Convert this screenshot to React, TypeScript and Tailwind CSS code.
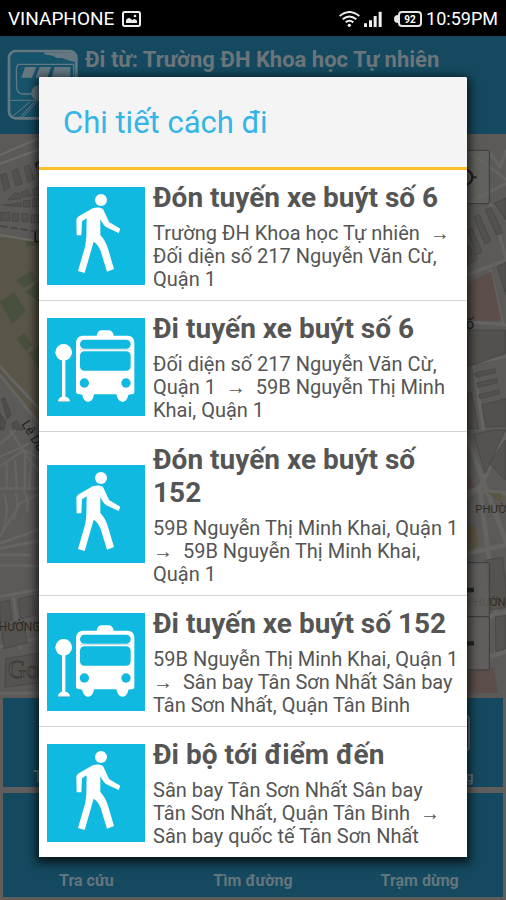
interface Step {
  mode: "walk" | "bus";
  title: string;
  from: string;
  to: string;
}

const steps: Step[] = [
  {
    mode: "walk",
    title: "Đón tuyến xe buýt số 6",
    from: "Trường ĐH Khoa học Tự nhiên",
    to: "Đối diện số 217 Nguyễn Văn Cừ, Quận 1",
  },
  {
    mode: "bus",
    title: "Đi tuyến xe buýt số 6",
    from: "Đối diện số 217 Nguyễn Văn Cừ, Quận 1",
    to: "59B Nguyễn Thị Minh Khai, Quận 1",
  },
  {
    mode: "walk",
    title: "Đón tuyến xe buýt số 152",
    from: "59B Nguyễn Thị Minh Khai, Quận 1",
    to: "59B Nguyễn Thị Minh Khai, Quận 1",
  },
  {
    mode: "bus",
    title: "Đi tuyến xe buýt số 152",
    from: "59B Nguyễn Thị Minh Khai, Quận 1",
    to: "Sân bay Tân Sơn Nhất Sân bay Tân Sơn Nhất, Quận Tân Binh",
  },
  {
    mode: "walk",
    title: "Đi bộ tới điểm đến",
    from: "Sân bay Tân Sơn Nhất Sân bay Tân Sơn Nhất, Quận Tân Binh",
    to: "Sân bay quốc tế Tân Sơn Nhất",
  },
];

function WalkIcon() {
  return (
    <svg viewBox="0 0 294 294" className="size-[98px] shrink-0 bg-[#0fb9e0]" aria-hidden="true">
      <g fill="#fff">
        <circle cx="162" cy="39" r="18" />
        <path d="M137 64 C147 60 161 60 168 66 C177 83 180 94 187 106 L220 125 L215 138 L178 121 C170 115 165 107 160 96 L160 144 C171 156 178 169 183 185 L201 246 L180 254 L161 192 C156 178 148 169 140 164 L113 258 L93 252 L115 176 L118 151 L119 94 L105 103 L103 145 L89 145 L88 98 C89 92 93 89 98 86 Z" />
      </g>
    </svg>
  );
}

function BusIcon() {
  return (
    <svg viewBox="0 0 294 294" className="size-[98px] shrink-0 bg-[#0fb9e0]" aria-hidden="true">
      <g fill="#fff">
        <circle cx="50" cy="103" r="25" />
        <path d="M45 125 H55 V236 C63 237 68 242 69 250 H33 C34 242 39 237 45 236 Z" />
        <path d="M107 53 H149 C152 40 158 37 164 37 H185 C192 37 198 41 200 53 H243 C256 54 262 62 262 76 V222 C262 226 259 229 252 229 L244 230 C242 243 235 251 226 251 C217 251 211 243 208 229 H141 C139 243 133 251 124 251 C115 251 108 244 106 230 L98 229 C90 229 87 226 87 220 V76 C87 62 95 54 107 53 Z" />
      </g>
      <g fill="#0fb9e0">
        <rect x="99" y="65" width="152" height="27" rx="13" />
        <rect x="99" y="100" width="152" height="58" rx="13" />
        <circle cx="112" cy="195" r="14" />
        <circle cx="237" cy="195" r="14" />
      </g>
      <path d="M99 95 H251" stroke="#a9c5ca" strokeWidth="2" />
      <path d="M55 128 V234 M33 250 H69" stroke="#a9c5ca" strokeWidth="3" />
    </svg>
  );
}

function StatusBar() {
  return (
    <div className="flex h-9 items-center justify-between bg-black px-2 pt-0.5 text-white">
      <div className="flex items-center gap-2">
        <span className="text-[19px]">VINAPHONE</span>
        <svg viewBox="0 0 57 48" className="h-4 w-[19px]" aria-hidden="true">
          <rect x="3" y="3" width="51" height="42" rx="5" fill="none" stroke="#eee" strokeWidth="6" />
          <path d="M12 36 V28 Q19 17 27 24 L31 28 Q37 20 45 29 V36 Z" fill="#eee" />
          <circle cx="39" cy="15" r="4" fill="#eee" />
        </svg>
      </div>
      <div className="flex items-center gap-1">
        <svg viewBox="0 0 63 48" className="h-4 w-[21px]" fill="none" stroke="#eee" strokeWidth="6" aria-hidden="true">
          <path d="M2 15 Q31 -9 61 15 M11 25 Q31 8 52 25 M20 34 Q31 25 43 34" />
          <circle cx="31" cy="43" r="5" fill="#eee" stroke="none" />
        </svg>
        <svg viewBox="0 0 54 48" className="h-4 w-[18px]" fill="#eee" aria-hidden="true">
          <path d="M0 37 h9 v11 h-9z M15 28 h9 v20 h-9z M29 15 h9 v33 h-9z M44 2 h9 v46 h-9z" />
        </svg>
        <div className="ml-2 flex items-center">
          <span className="h-2 w-1 rounded-l bg-neutral-200" />
          <span className="flex h-4 w-6 items-center justify-center rounded border-2 border-neutral-200 text-[10px] font-bold">
            92
          </span>
        </div>
        <span className="text-lg">10:59PM</span>
      </div>
    </div>
  );
}

function Logo() {
  return (
    <svg viewBox="0 0 216 216" className="size-[72px] shrink-0" aria-hidden="true">
      <rect x="6" y="6" width="202" height="202" rx="20" fill="#17536a" stroke="#657881" strokeWidth="8" />
      <path d="M112 10 H200 Q206 12 206 40 L194 37 L178 32 L165 27 L150 27 L136 20 L112 16 Z" fill="#657881" />
      <path d="M34 46 H200 V135 H49 Q31 135 29 117 L28 66 Q28 50 34 46 Z" fill="#17536a" stroke="#657881" strokeWidth="4" />
      <path d="M54 54 H88 L75 86 H43 Z M98 54 H132 L121 86 H86 Z M143 54 H190 V86 H134 Z" fill="#657881" />
      <circle cx="96" cy="132" r="23" fill="#657881" />
      <path d="M10 154 H206 M14 204 L70 158 M40 204 L86 154 M48 204 L92 156" stroke="#657881" strokeWidth="3" />
    </svg>
  );
}

function CityMap() {
  return (
    <svg
      viewBox="0 0 506 564"
      preserveAspectRatio="xMidYMid slice"
      className="absolute inset-0 h-full w-full bg-[#5b5a58]"
      role="img"
      aria-label="Bản đồ"
    >
      {/* west side, upper */}
      <g transform="translate(0 -4) scale(.3333)">
        <path d="M0 310 L140 330 V900 L0 730 Z" fill="#595548" />
        <path d="M0 75 L140 15 M0 102 L140 50 M0 315 L140 338" stroke="#6a6967" strokeWidth="7" fill="none" />
        <path
          d="M2 135 l16 -6 12 44 -18 8z M36 124 l17 -7 14 44 -19 7z M72 112 l15 -7 17 42 -20 9z M104 100 l16 -7 14 40 -17 7z M24 210 l20 -20 14 0 4 16z M64 188 l18 -9 10 18 -26 5z M98 178 l20 -8 8 22 -24 6z M10 226 l52 -8 2 12z M70 211 h20 v20 h-20z M98 206 h22 v24 h-22z M2 247 h28 v25 h-28z M38 250 h18 v24 h-18z M66 251 h18 v24 h-18z M92 254 h24 v24 h-24z"
          fill="#53514e"
          stroke="#444341"
          strokeWidth="2"
        />
        <path d="M0 288 L120 306" stroke="#444341" strokeWidth="5" strokeDasharray="22 9" />
        <path
          d="M50 450 l45 -28 17 24 -40 27z M77 485 l40 -30 v60z M0 515 l43 -28 34 55 -40 40z M50 626 l22 -18 24 36 -18 20z M84 670 l34 -20 v64z M78 334 h38 v14 h-38z"
          fill="#48503d"
        />
        <path d="M0 735 L118 882 M-4 705 L130 850" stroke="#656462" strokeWidth="9" />
        <path d="M4 808 l10 -5 20 50 -12 14z M0 850 l18 24 -6 26 h-12z M36 880 l14 -8 20 28 h-30z" fill="#504d48" stroke="#444341" strokeWidth="2" />
        <path d="M118 96 q-14 2 -8 16 M106 305 v30 h12" stroke="#1d1d1c" strokeWidth="5" fill="none" />
      </g>
      {/* west side, lower */}
      <g transform="translate(0 296) scale(.3333)">
        <path
          d="M0 42 L48 0 M0 80 L90 40 M30 0 L88 90 L140 150 M0 110 L70 60 L120 84 M0 175 L140 175 M20 100 V180 M46 90 L50 180 M75 76 V175 M98 10 L88 180 M0 320 L60 220 L140 180 M10 300 Q30 230 10 190 M40 270 Q60 220 46 185 M80 245 Q90 210 70 180"
          stroke="#656462"
          strokeWidth="7"
          fill="none"
        />
        <path d="M0 355 L140 328 M0 375 H90 M0 407 H140 M0 500 L140 474 M40 500 L62 660 M0 650 L140 620 M0 790 H140 M0 340 L140 290" stroke="#656462" strokeWidth="9" fill="none" />
        <path d="M54 508 l46 -12 8 58 -46 12z M4 590 l66 -14 12 62 -70 18z M18 686 l120 -20 v90 l-124 16z M0 518 l28 -8 8 60 -36 8z" fill="#555350" stroke="#444341" strokeWidth="2" />
      </g>
      {/* east side, upper */}
      <g transform="translate(460 -4) scale(.3333)">
        <path d="M20 60 L140 150 M90 70 L120 110 L140 60 M20 220 L140 160 M90 220 L140 390 M20 435 L140 390 M90 420 L130 590 M20 575 L140 585 M30 700 L140 680 M40 700 L70 900" stroke="#656462" strokeWidth="10" fill="none" />
        <path d="M22 458 L94 425 L124 572 H22 Z" fill="#5c4f4b" />
        <path
          d="M42 262 l16 -8 34 78 -18 10z M76 240 l18 -8 34 76 -18 8z M24 300 l12 -6 30 72 -18 10z M22 380 l20 -12 10 20 -30 18z M22 350 l8 -4 8 18 -16 10z M104 220 l34 -16 v66z M112 410 l26 -14 v100z M22 600 L136 600 V670 L36 706 H22 Z M44 730 l60 -14 2 12 -58 14z M50 760 l60 -14 2 12 -58 14z M56 794 l60 -14 2 12 -58 14z M66 824 l72 -18 v84 h-60z M22 790 l12 -4 22 110 h-34z"
          fill="#53514e"
          stroke="#444341"
          strokeWidth="2"
        />
        <rect x="-90" y="61" width="178" height="160" rx="5" fill="#666563" fillOpacity=".6" stroke="#3c3b3a" strokeWidth="3" />
        <circle cx="14" cy="142" r="23" fill="none" stroke="#232322" strokeWidth="7" />
        <path d="M38 142 h12" stroke="#232322" strokeWidth="6" />
        <text x="-32" y="597" fontSize="44" fill="#1d1d1c">phố</text>
      </g>
      {/* east side, lower */}
      <g transform="translate(460 296) scale(.3333)">
        <path d="M20 20 L140 340 M140 10 L60 170 L20 200 M20 180 L140 190 M60 180 L110 560 M20 370 L140 345 M88 560 L140 545 M88 680 L140 665" stroke="#656462" strokeWidth="14" fill="none" />
        <path d="M22 120 l20 52 -20 8z M22 725 l80 -15 12 80 h-92z" fill="#5c4f4b" />
        <path d="M84 190 h40 v30z M22 290 l24 -4 10 60 -34 22z" fill="#5b5440" />
        <path d="M40 14 l60 -14 h36 l-60 130z M88 100 l48 -70 v120z M78 390 l50 -8 10 100 v50 l-46 8z M106 560 l30 -4 v100 l-28 8z" fill="#555350" stroke="#444341" strokeWidth="2" />
        <text x="46" y="248" fontSize="34" fill="#2f2a1e">PHƯỜNG</text>
        <text x="20" y="528" fontSize="34" fill="#2f2a1e">PHƯỜNG</text>
        <rect x="-90" y="398" width="178" height="162" rx="4" fill="#61605e" fillOpacity=".75" stroke="#3c3b3a" strokeWidth="3" />
        <rect x="-90" y="560" width="178" height="160" rx="4" fill="#61605e" fillOpacity=".75" stroke="#3c3b3a" strokeWidth="3" />
        <path d="M-20 480 H42 M-20 640 H42" stroke="#242423" strokeWidth="13" />
      </g>
      <text x="-9" y="497" fontSize="12" fill="#2f2a1e">PHƯỜNG</text>
      <text x="8" y="544" fontSize="25" fontFamily="Liberation Serif, serif" fill="#5d5c5a" stroke="#3c3b3a">Google</text>
      <text transform="translate(21 290) rotate(58)" fontSize="13" fill="#1d1d1c">Lê Duẩn</text>
    </svg>
  );
}

export default function App() {
  return (
    <div className="relative flex min-h-screen flex-col bg-[#5f5e5c] font-['Roboto',sans-serif]">
      <StatusBar />

      {/* Dimmed screen behind the dialog */}
      <header className="flex h-[98px] shrink-0 items-center gap-1.5 bg-[#15495f] px-[7px]">
        <Logo />
        <div className="self-start pt-2.5 text-[22px] leading-[28px] font-bold whitespace-nowrap text-[#6b757a]">
          <p>Đi từ: Trường ĐH Khoa học Tự nhiên</p>
          <p>Đến: Sân bay quốc tế Tân Sơn Nhất</p>
        </div>
      </header>

      <main className="relative grow">
        <CityMap />
      </main>

      <nav className="flex flex-col gap-1.5 px-[3px] pb-[3px] text-base leading-5 font-bold text-[#63757d]">
        <div className="grid h-[89px] grid-cols-3 items-end bg-[#15495f] text-center">
          <a href="#tram">Tìm trạm dừng</a>
          <span />
          <a href="#duong" className="flex flex-col items-center gap-4 text-sm leading-5">
            <span className="h-9 w-[100px] rounded border-2 border-[#63757d]" />
            Tìm tuyến đường
          </a>
        </div>
        <div className="grid h-[104px] grid-cols-3 items-end bg-[#15495f] pb-1.5 text-center">
          <a href="#tra-cuu">Tra cứu</a>
          <a href="#tim-duong">Tìm đường</a>
          <a href="#tram-dung">Trạm dừng</a>
        </div>
      </nav>

      {/* Dialog */}
      <div className="absolute inset-x-0 top-[77px] px-[39px]">
        <section
          role="dialog"
          aria-labelledby="dialog-title"
          className="overflow-hidden rounded-t-xs bg-white shadow-[0_3px_10px_3px_rgba(0,0,0,0.7)]"
        >
          <h1
            id="dialog-title"
            className="border-b-3 border-[#fdbe2c] bg-[#f4f4f4] px-6 pt-[25px] pb-[23px] text-[31px] leading-[42px] text-[#33b5e5]"
          >
            Chi tiết cách đi
          </h1>
          <ul className="divide-y divide-neutral-300">
            {steps.map((step) => (
              <li key={step.title} className="flex items-center gap-2 px-2 pt-2.5 pb-[9px]">
                {step.mode === "walk" ? <WalkIcon /> : <BusIcon />}
                <div className="pt-px text-[#555]">
                  <h2 className="text-[28px] leading-[33px] font-bold">{step.title}</h2>
                  <p className="mt-2 text-xl leading-[23px] whitespace-pre-wrap">
                    {`${step.from}  →  ${step.to}`}
                  </p>
                </div>
              </li>
            ))}
          </ul>
        </section>
      </div>
    </div>
  );
}
